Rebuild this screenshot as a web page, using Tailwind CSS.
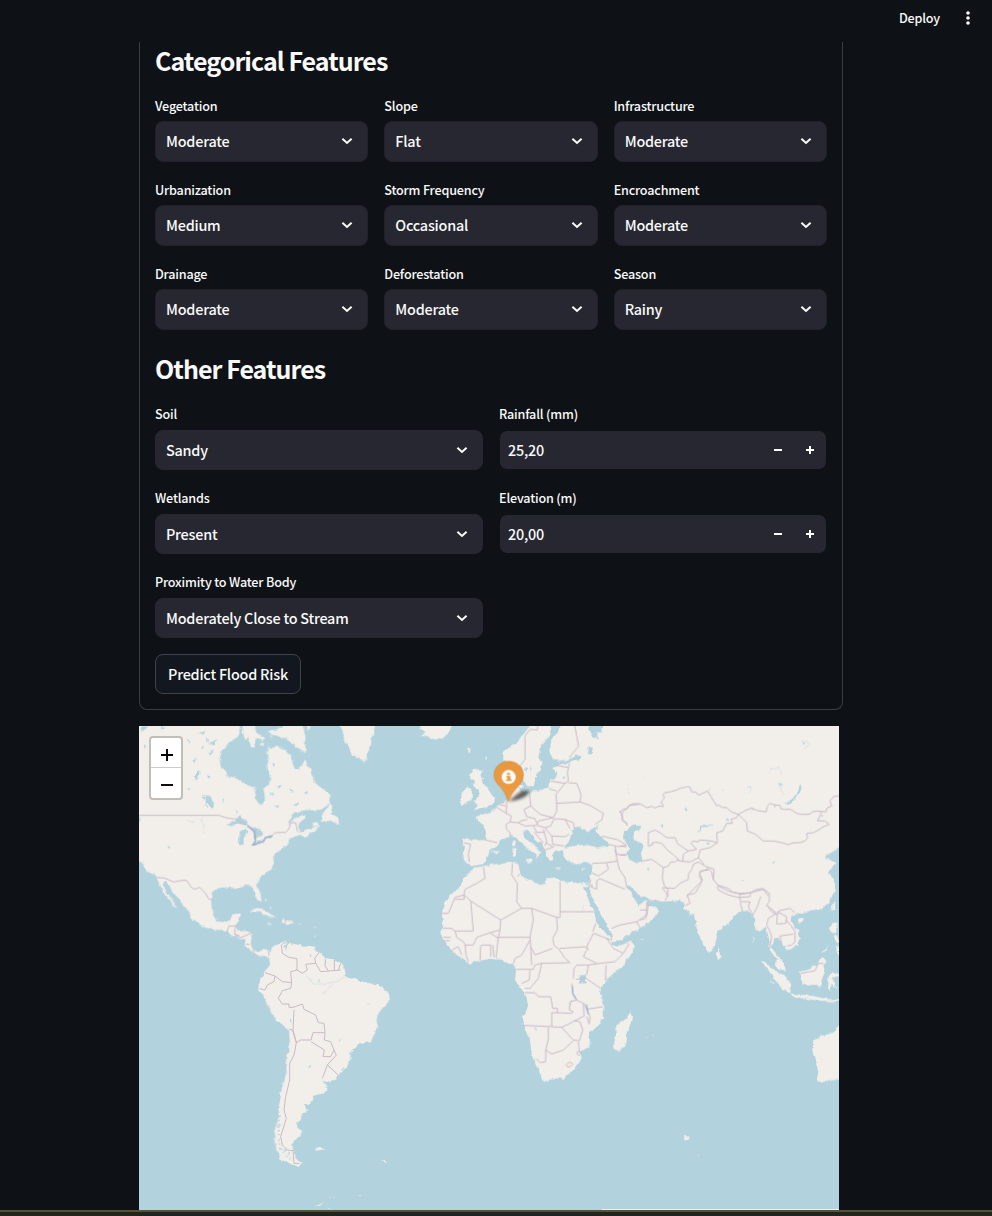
<!DOCTYPE html>
<html lang="en">
<head>
<meta charset="utf-8">
<title>Flood Risk Prediction</title>
<script src="https://cdn.jsdelivr.net/npm/@tailwindcss/browser@4"></script>
</head>
<body class="bg-[#0e1116] text-[#fafafa] font-['Noto_Sans_CJK_SC','Noto_Sans',sans-serif] font-medium">
<svg width="0" height="0" class="hidden">
  <symbol id="chev" viewBox="0 0 12 12"><path d="M1.4 3.7 6 8l4.6-4.3" fill="none" stroke="#fafafa" stroke-width="2"/></symbol>
</svg>
<div class="h-[1216px] w-[992px] overflow-hidden flex flex-col">
  <header class="h-[42px] shrink-0 flex justify-end items-start pt-[8px] pr-[22px] gap-[26px]">
    <span class="text-[12.6px] leading-5 tracking-[-0.18px]">Deploy</span>
    <svg class="w-1 h-5" viewBox="0 0 4 20" fill="#fafafa"><circle cx="2" cy="5" r="1.8"/><circle cx="2" cy="10" r="1.8"/><circle cx="2" cy="15" r="1.8"/></svg>
  </header>
  <main class="ml-[139px] w-[704px] shrink-0">
    <section class="border border-t-0 border-[#3b3d44] rounded-b-lg px-[15px] h-[668px] flex flex-col">
      <h2 class="h-10 leading-[37px] text-[25px] tracking-[-0.95px] font-bold shrink-0 whitespace-nowrap">Categorical Features</h2>
      <div id="cat" class="mt-3 grid grid-cols-3 gap-4"></div>
      <h2 class="mt-5 h-10 leading-[37px] text-[25px] tracking-[-0.95px] font-bold shrink-0 whitespace-nowrap">Other Features</h2>
      <div id="other" class="mt-3 grid grid-cols-2 gap-4"></div>
      <button class="mt-4 h-10 w-[146px] shrink-0 rounded-lg border border-[#41434b] bg-[#131720] pb-px text-[14.4px] tracking-[-0.22px] whitespace-nowrap">Predict Flood Risk</button>
    </section>
    <section class="relative mt-4 w-[700px] h-[484px] bg-[#b2d2dd] overflow-hidden">
      <svg class="block w-[700px] h-[484px]" viewBox="0 0 2100 1452">
        <defs>
          <filter id="rough" x="0" y="0" width="2100" height="1452" filterUnits="userSpaceOnUse"><feTurbulence type="fractalNoise" baseFrequency=".055" numOctaves="3" seed="4"/><feDisplacementMap in="SourceGraphic" scale="13" xChannelSelector="R" yChannelSelector="G"/></filter>
          <filter id="soft" x="-50%" y="-50%" width="200%" height="200%"><feGaussianBlur stdDeviation="4"/></filter>
          <linearGradient id="pin" x2="0" y2="1"><stop stop-color="#e8983f"/><stop offset="1" stop-color="#ee9c44"/></linearGradient>
        </defs>
        <g filter="url(#rough)">
          <g fill="#f2efea">
            <!-- North and Central America -->
            <path d="M-20-20H305L300 30 280 42 262 55 248 75 242 100 245 120 258 135 262 152 280 152 300 160 325 178 347 184 350 220 362 235 370 238 378 225 376 200 373 188 390 175 397 160 393 140 382 125 388 105 383 80 388 62 400 66 415 62 430 68 442 75 455 85 458 105 468 130 480 132 492 112 498 100 510 125 525 155 527 170 545 185 568 198 575 215 572 230 555 245 535 255 510 252 480 255 465 265 450 285 445 298 465 278 490 265 500 270 497 280 480 288 478 305 485 320 505 310 520 305 537 305 530 315 510 325 495 335 488 330 470 330 450 340 445 360 430 365 415 375 405 395 402 415 398 430 380 440 358 460 355 478 365 505 368 525 358 525 345 495 340 480 325 478 305 482 285 490 270 485 240 485 222 498 216 530 220 560 235 585 260 590 275 580 280 565 305 562 300 585 290 600 295 615 320 615 340 620 335 655 345 672 360 678 375 668 387 672 400 685 388 702 375 685 360 692 345 680 320 660 315 640 300 635 285 630 262 618 245 610 225 612 190 600 150 575 152 560 120 520 100 495 90 480 75 465 72 475 85 500 105 525 115 548 105 540 90 518 75 500 62 475 50 450 20 432 8 410 -20 398Z"/>
            <path d="M315-20H345L352 20 378 36 375 45 350 35 348 60 335 65 330 35 318 38 308 20ZM385 15 425 8 440-20H485L500 30 496 60 502 80 488 72 470 60 450 42 425 30 405 28ZM500-10H520L505 14ZM365 50 376 52 372 62 362 60ZM392 28 400 28 398 38ZM420 90 430 95 420 98Z"/>
            <path d="M594-20H714L700 30 695 60 680 95 675 108 655 96 640 90 625 60 612 28ZM840-20H945L930 20 910 36 890 44 870 34 845 30 860 18 845 8Z"/>
            <path d="M572 232 560 250 545 285 560 288 575 282 588 292 600 296 598 275 575 262 580 240ZM520 292 535 286 540 305 525 302Z"/>
            <path d="M330 557 350 546 375 552 395 565 418 576 390 574 365 560 345 556ZM424 590 430 578 448 580 466 590 450 594 435 592ZM383 590 396 592 393 597ZM476 590 488 591 486 595ZM377 518 383 520 381 528ZM390 540 398 544 394 548ZM525 600 529 603 527 608ZM526 625 530 629 527 634Z"/>
            <!-- South America -->
            <path transform="translate(0 612)" d="M386 75 405 48 430 38 440 30 440 45 455 40 480 45 510 48 530 50 528 62 545 70 560 85 585 88 605 98 612 112 622 125 615 140 635 142 655 148 680 158 710 162 730 172 745 182 752 200 745 220 730 235 717 252 716 285 705 315 695 335 665 342 640 358 634 370 635 390 620 415 600 435 590 450 575 455 550 450 562 462 565 478 555 490 520 498 518 515 508 522 495 522 498 535 505 540 490 550 490 565 475 580 475 590 488 600 480 618 468 632 460 645 463 665 475 690 492 700 478 712 450 700 430 690 415 665 408 640 405 605 414 580 420 540 425 500 425 485 440 440 445 380 452 330 450 300 435 285 410 270 400 255 385 225 372 195 358 180 360 155 375 130 388 112 392 95ZM530 656 540 650 556 654 545 660 534 662ZM728 690 736 690 744 699 738 698ZM525 830 555 818 540 829ZM575 801 585 803 577 805ZM568 836 580 840H568ZM658 792 668 793 662 796ZM606 144 628 140 636 152 614 153Z"/>
            <!-- Europe -->
            <g transform="translate(873)">
              <path d="M298-20 298 2 275 30 255 55 220 75 220 100 235 130 255 128 268 118 275 122 280 150 290 180 312 180 318 155 330 130 335 110 325 95 330 70 345 45 360 25 365-20Z"/>
              <path d="M130 130 160 130 150 145 158 158 162 175 178 195 192 215 188 235 165 245 130 252 145 238 130 228 140 215 150 205 145 190 132 180 135 165 120 150ZM112 180 126 188 125 222 100 238 90 232 95 215 92 200 105 192ZM110 65 122 68 118 80ZM166 98 172 94 168 108ZM248 345 257 342 256 360 250 360ZM248 365 260 368 258 390 248 388ZM283 400 308 398 305 412 288 406ZM370 425 395 430 385 434ZM455 432 470 428 460 436ZM180 378 210 374 200 384ZM264 176 278 174 276 188 266 186Z"/>
            </g>
            <path transform="translate(873)" d="M395-20 388 15 365 38 358 75 368 98 390 108 415 100 440 88 445 100 425 105 415 112 390 115 375 122 370 128 382 140 378 160 360 160 358 185 330 195 310 195 298 198 285 205 275 200 265 190 268 165 258 145 250 155 245 180 240 210 225 225 205 240 185 255 165 262 140 272 145 285 160 295 168 320 165 342 140 342 100 338 98 350 105 365 98 385 98 405 108 410 125 420 155 415 170 400 178 375 205 358 205 342 230 332 245 328 262 338 275 355 300 372 320 385 320 398 332 380 325 370 300 350 282 330 275 315 290 310 305 322 315 340 335 355 345 370 352 390 360 408 370 400 368 385 378 375 402 372 405 362 415 350 425 320 430 305 450 298 455 310 470 318 480 312 500 300 508 295 495 315 515 335 535 350 530 362 500 365 470 355 440 358 418 362 400 370 400 385 410 405 440 415 475 410 488 412 485 440 472 480 475 482 490 522 510 562 530 597 548 627 545 647 570 642 620 612 655 592 685 557 675 542 655 537 650 525 625 537 590 480 600 478 630 510 665 522 700 527 750 524 765 537 760 547 785 567 795 562 800 607 820 657 838 680 852 670 860 637 862 612 890 597 920 562 940 557 955 552 970 572 980 612 995 612 1008 602 1018 642 1018 672 1035 697 1040 722 1065 737 1058 707 1035 682 1025 662 1030 637 1045 637 1055 652 1070 672 1100 657 1110 637 1105 612 1080 587 1085 567 1105 562 1120 562 1170 550 1195 532 1215 492 1215 462 1195 437 1220 412 1205 402 1182 398 1185 388 1205 380 1225 365 1250 370V-20Z"/>
            <!-- Africa -->
            <path transform="translate(873 372)" d="M130 55 160 48 200 42 245 38 265 42 268 60 275 80 300 90 330 105 345 102 350 85 375 82 390 95 430 98 460 98 475 98 478 110 466 112 458 110 470 135 485 170 497 190 497 210 510 235 530 250 545 265 545 285 560 290 600 275 612 280 605 310 580 345 545 375 515 405 510 430 520 470 522 505 500 530 480 550 478 590 450 605 455 625 425 665 405 685 375 685 345 695 332 690 328 665 305 615 300 570 278 525 280 500 295 470 288 435 270 410 255 390 258 360 250 342 225 340 215 325 190 325 150 332 115 340 95 325 65 300 45 275 30 250 40 225 35 190 50 150 75 125 95 110 100 85 120 65ZM600 485 606 500 602 520 590 560 580 595 565 603 550 595 550 575 558 555 555 530 575 515 590 505Z"/>
            <!-- South and east Asia, Australia -->
            <path transform="translate(1503 372)" d="M232 293 242 310 244 320 234 327 229 315ZM360 332 375 335 395 355 430 375 450 400 452 428 430 420 405 390 385 360ZM450 430 480 434 520 438 555 446 597 450 597 455 540 452 500 447 460 440ZM478 365 500 360 530 345 545 322 560 335 550 345 555 365 545 390 540 410 520 405 490 402 482 385ZM565 380 575 370 597 372 597 378 575 384 582 395 590 420 575 400 572 425 565 410ZM475 205 490 203 490 213 480 219 473 213ZM585 155 584 175 575 180 573 165ZM578 218 590 220 588 250 575 245 570 235ZM580 255 597 262 597 282 590 275ZM546 308 567 285 556 304ZM590 290 597 292V320L590 305ZM338 262 342 262 338 282ZM440 396 450 396 447 402ZM388 385 405 402 400 402ZM0 268 12 270 5 273ZM16 562 25 562 20 565ZM36 554 42 554 38 557ZM620 520 597 525 580 548 545 558 520 572 517 600 525 630 535 665 530 690 545 697 570 688 620 685Z"/>
            <path d="M1635 1228 1641 1232 1653 1232 1648 1240 1636 1240ZM1674 1284 1680 1285 1679 1290ZM1492 1196 1498 1197 1495 1200Z"/>
          </g>
          <!-- Lakes and inland seas -->
          <g fill="#b2d2dd">
            <path d="M265 297 280 285 300 271 315 280 328 290 315 298 300 292 280 300ZM302 320 322 306 328 318 314 335 314 355 300 357ZM325 303 345 306 365 310 370 325 350 342 343 318ZM338 357 360 343 378 340 370 350 350 359ZM375 336 402 328 396 337ZM200 205 215 207 225 245 219 250 210 230 204 225 208 245 200 240ZM168 150 175 135 182 140 178 155 170 165ZM85 358 95 366 90 369ZM450 190 462 192 455 198ZM495 200 507 195 505 205ZM290 253 298 255 293 264ZM408 240 420 238 418 246ZM0 270 5 280 2 292ZM15 55 25 62 18 66ZM200 38 212 42 204 50ZM250 218 256 220 252 226ZM145 185 158 183 152 190ZM70 0 76 8 68 10ZM190 62 197 66 192 70ZM180 20 200 15 192 26ZM10 0 28 4 5 18Z"/>
            <path d="M210 50 240 42 222 58ZM205 80 225 70 216 85ZM160 105 170 98 168 110ZM205 145 215 152 208 160ZM400 110 410 118 402 118ZM415 180 430 176 420 188ZM392 205 400 200 408 210ZM465 235 480 230 472 240ZM100 52 115 55 108 62ZM145 40 152 48 146 52ZM190 205 200 218 192 222ZM435 660 440 650 445 665 439 672ZM510 684 518 682 515 690ZM452 882 458 880 461 890 456 890ZM510 1021 518 1020 519 1027 513 1026ZM606 1032 616 1022 612 1033ZM686 832 700 830 690 834ZM598 945 608 937 602 946ZM537 762 544 764 540 768Z"/>
            <path transform="translate(873)" d="M435 85 455 90 450 105 438 100ZM472 62 488 65 485 85 475 85ZM480-20 525-20 515 20 498 18 505 40 490 35 478 10ZM285 130 292 122 290 138ZM300 125 306 120 302 140ZM398 150 406 148 402 158ZM490 310 496 312 492 320ZM445 753 468 745 468 768 448 770ZM420 825 424 832 420 842ZM312 908 322 908 318 914Z"/>
            <path transform="translate(1443)" d="M8 318 25 308 38 295 60 297 58 315 42 318 40 335 52 350 68 355 72 370 62 375 68 408 50 414 30 405 22 385 28 365 15 345ZM235 318 238 300 255 298 283 298 262 303 245 303 242 315ZM258 350 272 346 270 354 260 353ZM493 233 515 220 530 205 540 175 545 180 540 200 520 225 505 236ZM462 238 468 236 464 248ZM120 300 130 298 128 306ZM392 248 402 250 398 256ZM456 408 466 408 463 414ZM368 460 372 462 368 466ZM92 355 100 350 96 360ZM318 275 328 285 320 284ZM550 48 556 50 553 56ZM474 168 484 170 478 180ZM193 248 199 247 196 255ZM80 428 88 426 86 434ZM266 185 272 188 267 192ZM604 268 610 265 607 274Z"/>
          </g>
          <g fill="none" stroke="#b2d2dd" stroke-width="2" opacity=".65">
            <path d="M500 750 530 775 560 772 590 768 620 755M550 808 580 775M190 275 194 325M145 282 165 290M1892 130 1920 124 1928 145M1925 170 1932 205M1825 185 1835 180 1830 200M1750 195 1758 188M1465 180 1470 205M1512 158 1520 150M1325 560 1335 540M1985 42 2005 45 2010 55 1996 68"/>
          </g>
          <path fill="none" stroke="#b2d2dd" stroke-width="7" stroke-dasharray="5 9" d="M418 1155 420 1240 428 1275 455 1300M436 1270 452 1285M1248 375 1270 400M1260 400 1290 405M1300 465 1360 478"/>
        </g>
        <!-- Country borders -->
        <g>
          <g fill="none" stroke="#c9b9c6" stroke-width="3" stroke-linejoin="round">
            <path d="M0 268H240L260 275 292 280 325 297 346 315 350 345 340 357 372 348 378 335 400 328 408 320 440 319 450 308 455 290 470 290 476 318M52 454 75 456 105 468 128 463 142 463 158 485 167 490 182 484 198 500 210 520 222 521M262 620 270 600H290L298 590M290 600 286 625 300 628M290 625 305 635 340 620M320 655 332 655M342 668 345 682M388 672 390 690M438 578 440 592"/>
            <path transform="translate(0 612)" d="M438 35 427 45 430 70 450 82 474 86 474 120 455 125 458 158 430 155 408 138 378 128M408 138 405 155 385 165 378 180 362 176M474 120 490 130 505 120 500 103 530 100 527 85 540 68M530 100 545 125 605 120M560 88 558 108 568 122M586 90V120M605 100 598 120M458 158 455 175 430 182 418 205 430 222 450 222 450 232 462 232 490 222 495 238 530 255 538 278 555 280 558 308 522 308 516 330 485 330 472 338 462 300 465 240M558 308 556 330 575 335 585 360 575 380 552 380 556 360 516 335M585 360 592 375 565 405 550 445M565 405 598 435 592 445M450 297 460 300 472 338 465 375 452 400 452 450 440 500 435 540 442 565 425 620 430 645 445 660 462 662 465 700H482"/>
            <path transform="translate(873)" d="M325-20 322 12 300 10 285 30 285 100 270 120M430-20 440 30 446 60 418 95M418 112 412 140 415 165 405 172 362 165M380 118 415 125M415 170 440 172 453 205 450 228 380 232 378 205 405 172M358 188 380 195 M380 232 380 255 370 275 330 265 302 240 298 198M302 240 282 250 290 272 315 278 322 295M230 212 230 240 228 262 244 270 240 288 228 295 230 310 240 320 240 332M195 240 228 262M205 235 228 240M166 342 202 350M102 350 122 355 115 385 118 408M240 288 265 290 285 300 320 298 325 285 370 275M265 290 272 285 292 280M322 298 345 305 362 300 372 278 405 280 430 290 432 305M345 305 365 330 405 332 418 325M405 280 420 308M310 300 320 320 345 318M312 318 340 350M340 310 350 345 345 360M365 330 368 355 402 360M348 350 368 362M345 372 372 362M450 228 480 238 520 262 515 282 495 295M628 235 600 238 578 258 575 280 590 295M516 330 565 342 590 358 565 362 535 355M555 362 560 385 588 388M488 412 530 410 562 405 555 370M562 405 568 430 585 455 590 485M485 440 505 450 535 430 530 412M478 480 500 490 500 465 510 458 585 490M472 455 482 462 475 490"/>
            <path transform="translate(873 372)" d="M160 50 165 85 140 100 105 118 102 135 75 142 55 190H33M102 135V148H75M102 135 125 155M122 155 130 243H75L65 235H38M125 155 212 210 275 175 260 155 262 100 245 75 247 40M262 80 268 72M390 95V185H492M390 185V202H380L305 175 275 175M380 202 382 240 368 265 372 285 388 300 405 325 420 338M305 175 310 210 300 260 302 290 315 315 368 295M212 210 210 240 180 248 140 262 130 285 105 285 100 275 80 262 75 243M210 240 205 262H300M205 262 198 322M180 248 205 265M155 285H182V320M152 285 150 332M188 285 192 322M105 285 108 315 115 335M40 262H62M38 272H60M65 300 85 290 95 315M300 270 275 315 255 325 250 342M258 358H310L315 345 335 340 420 338M335 340 325 385 300 415 285 415M300 360 298 390 275 400M302 290 305 345M285 428H315L325 440 362 440 368 475 382 475V488H365V530L278 526M382 488 425 490 430 485 418 480 420 455 440 450 460 460 462 498 410 525 395 532 365 530M430 385 432 355 440 345 475 345 510 340 555 335 580 310 550 295 530 265 490 250 470 290 475 300 465 290 440 292 388 295M497 220 488 245M530 265 545 270M580 310 598 280M470 300 460 320 500 340M528 345 526 390M438 388 468 385 512 415M425 400 428 430 440 450M468 478 520 470M462 460 480 500 478 522 470 500M395 532 430 570 448 572 458 540 450 515 432 512M355 532V568L347 600V635L330 638 318 625M347 600 365 612 400 600 430 572M445 575 448 605M440 608Q450 598 452 612 445 622 440 608M408 645Q420 630 428 642 415 658 408 645M475 345 470 375M545 235 570 225 620 215 630 232M620 215 650 195 655 165"/>
            <path transform="translate(1443)" d="M0 260 10 248 20 250 28 238 40 233 60 233 80 245 95 241 105 246 118 240 130 242 128 234 122 230 134 214 128 206 135 200 152 197 170 192 185 184 190 187 198 181 210 183 215 198 228 198 235 208 262 195 275 215 290 240 297 237 305 244 320 245 335 258 355 265 375 254 395 246 410 253 438 258 443 240 450 232 465 237 480 238 482 248 495 250 512 250 530 262 545 265 568 265 580 256 605 256 617 258 622 245 635 240 630 225 640 212 660 208M355 265 380 290 382 315 405 324 430 345 460 345 485 350 505 356 520 350 540 350 555 345 563 335 560 322 580 320 595 312 610 302 628 295 615 285 592 284 600 270 605 256M355 265 350 275 333 280 337 292 320 292 308 315 290 320 292 350 270 365 255 368 240 372 235 395 210 408 180 405 162 388 140 370 125 352 105 348 90 360H85V320L105 312 120 320 140 335 165 335 172 352 190 365 205 375 230 370 212 352 220 345 235 348 238 342 270 344 290 350M205 375 190 385 188 405M0 255 6 270 10 285 20 290 22 300M20 362 0 360M22 385 0 388M68 405 95 400 110 410 130 425 145 420 152 408 165 408 170 402 180 405M130 425 127 455 133 480 145 490 140 510M127 485 165 487 180 472 205 460 205 445 215 430 220 415 235 408 255 420 282 430 280 460 295 480 325 495 365 505 390 500 430 490 445 510M235 395 252 415M200 510 225 485 245 465 238 450 240 435 265 432"/>
            <path transform="translate(1503 372)" d="M67 115 85 135 75 152M205 55 215 66 220 90M205 55 178 68 187 90 180 105 165 130 142 135 150 160 135 167M235 106 265 115 280 128 300 130 298 143 265 135 235 120 232 112 235 106M300 130 332 128 345 120 368 115 388 130 388 155 380 165 395 185 412 195 418 182 450 175 465 188M300 142 330 140 332 128M300 142 302 165 308 185M305 155 330 155 325 170 338 195 350 175 362 140M380 165 410 190 385 205 380 225 388 240 395 260 388 300M412 185 440 200 438 220 410 222 412 195M438 210 452 225 465 245 465 275 455 285 440 288M425 280 420 258 460 252M400 322 415 328M482 370 525 362 535 340 550 340M0 180H20L20 155M20 180 18 205 0 210"/>
          </g>
          <path d="M325 298 346 315 349 345 342 357 375 345 380 335 400 330M1300 780 1302 805 1312 820M1342 835 1348 865" fill="none" stroke="#92adcb" stroke-width="4" opacity=".8"/>
        </g>
        <path d="M1389 1449H2100V1452H1389Z" fill="#f2efea"/>
        <!-- Location marker -->
        <path d="M1108 226 1145 196 1170 194Q1170 212 1135 222Z" fill="#222" opacity=".7" filter="url(#soft)"/>
        <path d="M1108 226Q1098 195 1079 177 1065 164 1065 148C1065 124 1084 106 1109 106S1153 124 1153 148Q1153 166 1136 182 1117 201 1108 226Z" fill="url(#pin)" stroke="#d5852f" stroke-width="2"/>
        <circle cx="1109" cy="153" r="21" fill="#fff"/>
        <path d="M1104 141h9v6h-9zM1102 150h12v10h4v5h-17v-5h4v-5h-3z" fill="#e8983f"/>
      </svg>
      <div class="absolute left-[10px] top-[10px] w-[34px] h-[64px] rounded-[4px] border-2 border-[#c1beba] bg-white flex flex-col">
        <div class="h-[30px] flex items-center justify-center border-b border-[#ccc]"><svg class="w-3 h-3 mt-1 ml-px" viewBox="0 0 12 12"><path d="M6 0v12M0 6h12" stroke="#000" stroke-width="1.9"/></svg></div>
        <div class="h-[30px] flex items-center justify-center"><svg class="w-3 h-3 mt-1 ml-px" viewBox="0 0 12 12"><path d="M0 6h12" stroke="#000" stroke-width="1.9"/></svg></div>
      </div>
    </section>
  </main>
  <footer class="h-[6px] shrink-0 border-t-2 border-[#55523a] bg-[#23241d]"></footer>
</div>
<script>
const label = t => `<div class="h-6 leading-6 text-[12.6px] tracking-[-0.18px] whitespace-nowrap">${t}</div>`;
const select = (t, v, box) => `<div class="h-[68px]">${label(t)}<div class="${box} rounded-lg border bg-[#262730] flex items-center justify-between pl-[10px] pr-[14px] text-[14.4px] tracking-[-0.22px]"><span>${v}</span><svg class="w-3 h-3"><use href="#chev"/></svg></div></div>`;
const number = (t, v) => `<div class="h-[68px]">${label(t)}<div class="mt-[5px] mx-px h-[38px] rounded-[7px] bg-[#262730] flex items-center pl-2 pr-3 text-[14.4px] tracking-[-0.22px]"><span class="grow pb-px">${v}</span><svg class="w-10 h-2" viewBox="0 0 40 8"><path d="M0 4h8M32 4h8M36 0v8" stroke="#fff" stroke-width="2"/></svg></div></div>`;
const short = 'mt-[3px] h-[41px] pb-px border-[#202129]';
const wide = 'mt-1 h-10 border-[#262730]';
document.getElementById('cat').innerHTML = [['Vegetation','Moderate'],['Slope','Flat'],['Infrastructure','Moderate'],['Urbanization','Medium'],['Storm Frequency','Occasional'],['Encroachment','Moderate'],['Drainage','Moderate'],['Deforestation','Moderate'],['Season','Rainy']].map(([t, v]) => select(t, v, short)).join('');
document.getElementById('other').innerHTML = select('Soil','Sandy',wide) + number('Rainfall (mm)','25,20') + select('Wetlands','Present',wide) + number('Elevation (m)','20,00') + select('Proximity to Water Body','Moderately Close to Stream',wide);
</script>
</body>
</html>
